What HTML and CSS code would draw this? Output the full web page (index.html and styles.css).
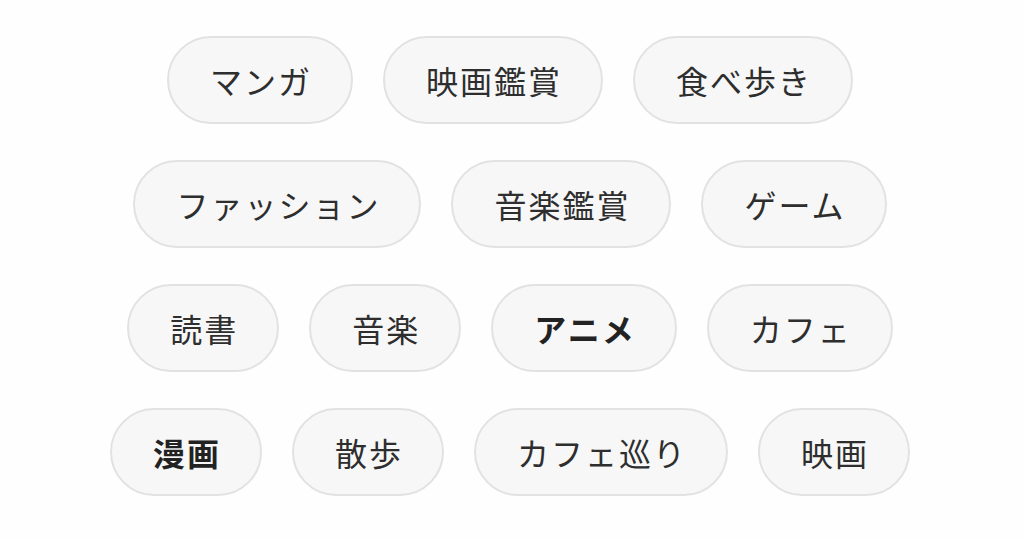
FILE: index.html
```html
<!DOCTYPE html>
<html lang="ja">
<head>
<meta charset="utf-8">
<link rel="stylesheet" href="styles.css">
</head>
<body>
<div class="tags">
  <div class="row">
    <span class="tag">マンガ</span>
    <span class="tag">映画鑑賞</span>
    <span class="tag">食べ歩き</span>
  </div>
  <div class="row">
    <span class="tag">ファッション</span>
    <span class="tag">音楽鑑賞</span>
    <span class="tag">ゲーム</span>
  </div>
  <div class="row">
    <span class="tag">読書</span>
    <span class="tag">音楽</span>
    <span class="tag tag-bold">アニメ</span>
    <span class="tag">カフェ</span>
  </div>
  <div class="row">
    <span class="tag tag-bold">漫画</span>
    <span class="tag">散歩</span>
    <span class="tag">カフェ巡り</span>
    <span class="tag">映画</span>
  </div>
</div>
</body>
</html>
```
FILE: styles.css
```css
html, body {
  margin: 0;
  padding: 0;
  background: #fefefe;
}
body {
  font-family: "Noto Sans CJK JP", "Noto Sans", sans-serif;
  color: #2e2e2e;
  width: 1024px;
  height: 538px;
  overflow: hidden;
}
.tags {
  display: flex;
  flex-direction: column;
  gap: 36px;
  padding-top: 36px;
  padding-right: 4px;
}
.row {
  display: flex;
  justify-content: center;
  gap: 30px;
}
.tag {
  box-sizing: border-box;
  height: 88px;
  padding: 0 39px 0 41px;
  display: flex;
  align-items: center;
  border: 2px solid #e2e2e2;
  border-radius: 44px;
  background: #f7f7f7;
  font-size: 32px;
  letter-spacing: 2px;
  line-height: 1;
  white-space: nowrap;
}
.tag-bold {
  font-weight: 700;
  color: #222;
}
```
